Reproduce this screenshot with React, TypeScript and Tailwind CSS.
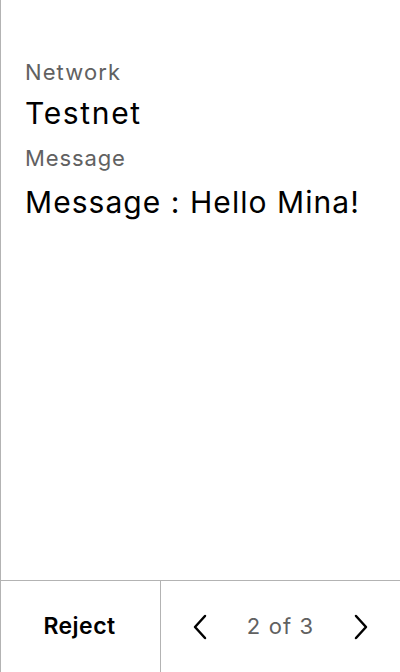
export default function App() {
  return (
    <div className="flex h-[672px] w-[400px] flex-col border-l border-[#b3b3b3] bg-white font-['Inter',sans-serif]">
      <div className="flex flex-1 flex-col px-6 pt-[58px]">
        <div className="text-[22px] leading-[28px] tracking-[0.05em] text-[#616161]">Network</div>
        <div className="mt-[7px] text-[30px] leading-[40px] tracking-[0.055em] text-black">Testnet</div>
        <div className="mt-[11px] text-[22px] leading-[28px] tracking-[0.04em] text-[#616161]">Message</div>
        <div className="mt-[10px] text-[30px] leading-[40px] tracking-[0.035em] text-black">Message : Hello Mina!</div>
      </div>
      <div className="flex h-[92px] border-t border-[#b3b3b3]">
        <button className="flex w-[160px] items-center justify-center border-r border-[#b3b3b3] pr-[2px] text-[23px] font-semibold tracking-[0.02em] text-black">
          Reject
        </button>
        <div className="flex flex-1 items-center justify-between px-8">
          <svg width="14" height="26" viewBox="0 0 14 26" fill="none" stroke="black" strokeWidth="2.5" strokeLinecap="round" strokeLinejoin="round">
            <path d="M12 2L2 13l10 11" />
          </svg>
          <span className="text-[22px] tracking-[0.05em] text-[#616161]">2 of 3</span>
          <svg width="14" height="26" viewBox="0 0 14 26" fill="none" stroke="black" strokeWidth="2.5" strokeLinecap="round" strokeLinejoin="round">
            <path d="M2 2l10 11L2 24" />
          </svg>
        </div>
      </div>
    </div>
  );
}
